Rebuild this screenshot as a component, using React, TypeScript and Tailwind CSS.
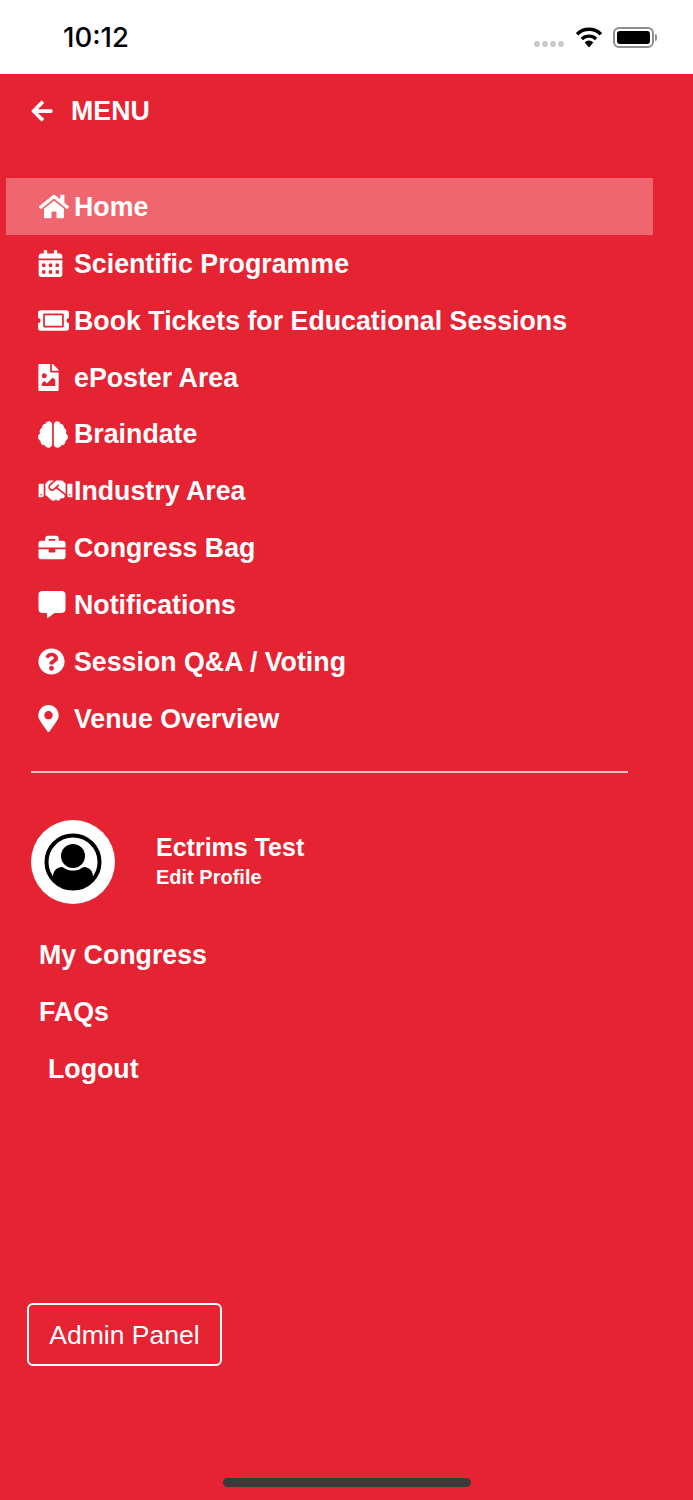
import {
  FaArrowLeft,
  FaHome,
  FaCalendarAlt,
  FaTicketAlt,
  FaFileImage,
  FaBrain,
  FaHandshake,
  FaBriefcase,
  FaCommentAlt,
  FaQuestionCircle,
  FaMapMarkerAlt,
} from "react-icons/fa";

const items = [
  { label: "Scientific Programme", icon: <FaCalendarAlt className="w-[25px] h-[27px]" /> },
  { label: "Book Tickets for Educational Sessions", icon: <FaTicketAlt className="w-[31px] h-[31px]" /> },
  { label: "ePoster Area", icon: <FaFileImage className="w-[21px] h-[27px]" /> },
  { label: "Braindate", icon: <FaBrain className="w-[30px] h-[27px]" /> },
  { label: "Industry Area", icon: <FaHandshake className="w-[35px] h-[27px]" /> },
  { label: "Congress Bag", icon: <FaBriefcase className="w-[28px] h-[27px]" /> },
  { label: "Notifications", icon: <FaCommentAlt className="w-[28px] h-[27px]" /> },
  { label: "Session Q&A / Voting", icon: <FaQuestionCircle className="w-[27px] h-[27px]" /> },
  { label: "Venue Overview", icon: <FaMapMarkerAlt className="w-[21px] h-[27px]" /> },
];

function Row({ icon, label, active }: { icon: React.ReactNode; label: string; active?: boolean }) {
  return (
    <div className={`h-[56.9px] flex items-center pl-[32px] ${active ? "bg-[#f0666f]" : ""}`}>
      <div className="w-[36px] shrink-0 flex items-center">{icon}</div>
      <span className="mt-[1px] text-[26.75px] font-bold whitespace-nowrap">{label}</span>
    </div>
  );
}

export default function App() {
  return (
    <div className="w-[693px] h-[1500px] overflow-hidden flex flex-col bg-[#e52332] text-white font-['Liberation_Sans',Arial,sans-serif]">
      {/* Status bar */}
      <div className="h-[74px] shrink-0 bg-white flex items-center justify-between pl-[63px] pr-[36px] text-black">
        <span className="mt-[2px] text-[27.5px] font-['Inter',sans-serif] font-medium leading-none">10:12</span>
        <div className="flex items-center">
          <div className="flex gap-[2px] mt-[13px] mr-[11px]">
            <div className="w-[6px] h-[6px] rounded-full bg-[#c9c9c9]" />
            <div className="w-[6px] h-[6px] rounded-full bg-[#c9c9c9]" />
            <div className="w-[6px] h-[6px] rounded-full bg-[#c9c9c9]" />
            <div className="w-[6px] h-[6px] rounded-full bg-[#c9c9c9]" />
          </div>
          <svg width="28" height="21" viewBox="0 0 28 22" className="mr-[10px]">
            <path d="M1.5 7.5a18 18 0 0 1 25 0" fill="none" stroke="#000" strokeWidth="3.6" />
            <path d="M6.500 12.500a11 11 0 0 1 15 0" fill="none" stroke="#000" strokeWidth="3.6" />
            <path d="M9.500 16.200a6 6 0 0 1 9 0L14 21.500z" fill="#000" />
          </svg>
          <div className="w-[41px] h-[21px] rounded-[6px] border-2 border-[#8e8e8e] p-[2px]">
            <div className="w-full h-full rounded-[3px] bg-black" />
          </div>
          <div className="w-[2px] h-[7px] ml-[1px] rounded-r-full bg-[#8e8e8e]" />
        </div>
      </div>

      {/* Header */}
      <div className="h-[74px] shrink-0 flex items-center pl-[30px]">
        <FaArrowLeft className="w-[24px] h-[24px]" />
        <span className="ml-[17px] text-[26.75px] font-bold leading-none">MENU</span>
      </div>

      {/* Main menu */}
      <div className="mt-[30px] ml-[6px] w-[647px]">
        <Row active label="Home" icon={<FaHome className="ml-[1px] w-[30px] h-[27px]" />} />
        {items.map((item) => (
          <Row key={item.label} label={item.label} icon={item.icon} />
        ))}
      </div>

      <div className="mt-[24.4px] ml-[31px] w-[597px] h-[2px] bg-white/70" />

      {/* Profile */}
      <div className="mt-[47px] ml-[31px] flex items-center">
        <div className="w-[84px] h-[84px] rounded-full bg-white flex items-center justify-center">
          <svg width="58" height="58" viewBox="0 0 58 58">
            <defs>
              <clipPath id="avatar">
                <circle cx="29" cy="29" r="26" />
              </clipPath>
            </defs>
            <circle cx="29" cy="29" r="26.500" fill="#fff" stroke="#000" strokeWidth="4" />
            <g clipPath="url(#avatar)">
              <circle cx="29" cy="23" r="12" fill="#000" />
              <path d="M9 58V44c0-6 3-9 8-10 3-.6 4 3.500 12 3.500s9-4 12-3.500c5 1 8 4 8 10v14z" fill="#000" />
            </g>
          </svg>
        </div>
        <div className="ml-[41px] -mt-[2px] flex flex-col">
          <span className="text-[25px] font-bold leading-[31px]">Ectrims Test</span>
          <span className="text-[20px] font-bold leading-[28px]">Edit Profile</span>
        </div>
      </div>

      {/* Secondary links */}
      <div className="mt-[22px] text-[26.75px] font-bold">
        <div className="h-[57px] flex items-center pl-[39px]">My Congress</div>
        <div className="h-[57px] flex items-center pl-[39px]">FAQs</div>
        <div className="h-[57px] flex items-center pl-[48px]">Logout</div>
      </div>

      <div className="mt-[205.6px] ml-[27px] w-[195px] h-[63px] rounded-[6px] border-2 border-white flex items-center justify-center pt-[2px] text-[26.5px]">
        Admin Panel
      </div>

      <div className="mt-[112px] ml-[223px] w-[248px] h-[9px] rounded-full bg-[#3a3a3a]" />
    </div>
  );
}
